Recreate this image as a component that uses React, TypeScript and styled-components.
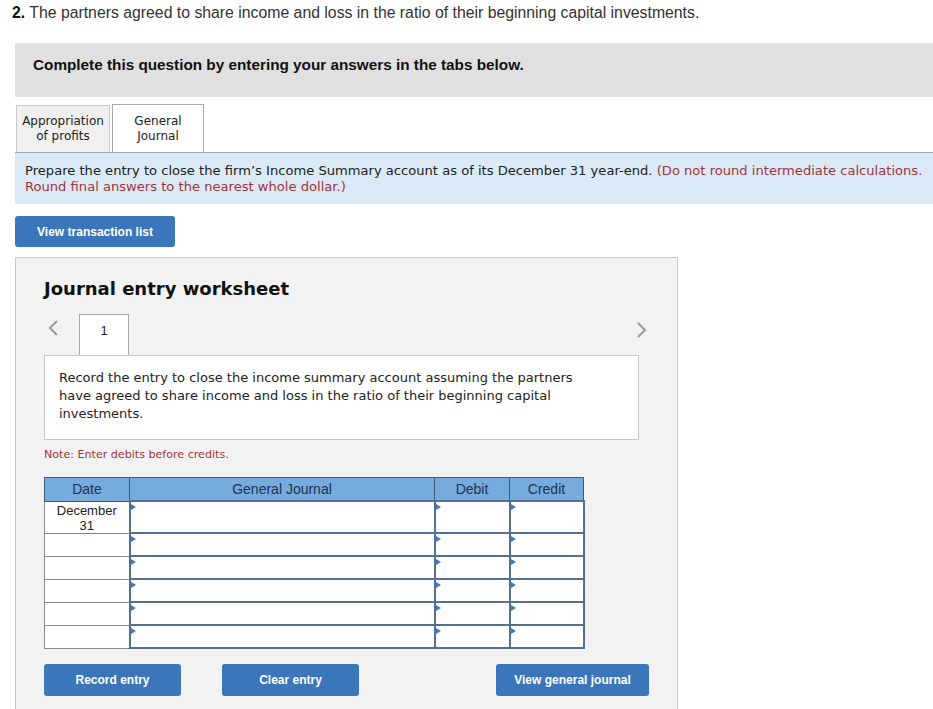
import styled, { createGlobalStyle } from "styled-components";

const GlobalStyle = createGlobalStyle`
  html, body {
    margin: 0;
    padding: 0;
    background: #ffffff;
  }
  body {
    font-family: "Liberation Sans", Arial, sans-serif;
  }
`;

const Page = styled.div`
  width: 933px;
`;

const Heading = styled.div`
  padding: 4px 0 0 12px;
  font-size: 15.8px;
  line-height: 17px;
  color: #333333;

  b {
    color: #111111;
  }
`;

const QuestionBox = styled.div`
  margin: 22px 0 0 15px;
  height: 54px;
  box-sizing: border-box;
  padding: 14px 18px 0;
  background: #e0e0e0;
  font-size: 15.3px;
  font-weight: bold;
  line-height: 16px;
  color: #111111;
`;

const TabRow = styled.div`
  display: flex;
  align-items: flex-end;
  height: 48px;
  margin: 7px 0 0 15px;
`;

const Tab = styled.div<{ $active?: boolean }>`
  display: flex;
  align-items: center;
  justify-content: center;
  box-sizing: border-box;
  width: ${(p) => (p.$active ? 92 : 94)}px;
  height: ${(p) => (p.$active ? 48 : 47)}px;
  margin-left: ${(p) => (p.$active ? 2 : 1)}px;
  background: ${(p) => (p.$active ? "#ffffff" : "#f0f0f0")};
  border: 1px solid ${(p) => (p.$active ? "#a9a9a9" : "#c9c9c9")};
  border-bottom: none;
  text-align: center;
  font-family: "DejaVu Sans", Verdana, sans-serif;
  font-size: 12px;
  line-height: 15px;
  color: #222222;
`;

const InfoPanel = styled.div`
  margin-left: 15px;
  border-top: 1px solid #a9a9a9;
  background: #dbeaf7;
  padding: 10px 10px 9px;
  font-family: "DejaVu Sans", Verdana, sans-serif;
  font-size: 13.1px;
  line-height: 16px;
  color: #222222;
`;

const Hint = styled.span`
  color: #a3343a;
`;

const BlueButton = styled.button<{ $w: number; $h?: number }>`
  display: block;
  width: ${(p) => p.$w}px;
  height: ${(p) => p.$h ?? 32}px;
  padding: 0;
  border: none;
  border-radius: 3px;
  background: #3a76b9;
  color: #ffffff;
  font-family: "Liberation Sans", Arial, sans-serif;
  font-size: 12px;
  font-weight: bold;
  text-align: center;
  cursor: pointer;
`;

const TopButtonWrap = styled.div`
  margin: 12px 0 0 15px;
`;

const Worksheet = styled.div`
  margin: 10px 0 0 15px;
  width: 663px;
  box-sizing: border-box;
  border: 1px solid #c9c9c9;
  background: #f2f2f2;
  padding: 20px 0 40px 28px;
`;

const WorksheetTitle = styled.div`
  font-family: "DejaVu Sans", Verdana, sans-serif;
  font-size: 18px;
  font-weight: bold;
  line-height: 22px;
  color: #111111;
`;

const NavRow = styled.div`
  display: flex;
  align-items: flex-start;
  width: 606px;
  height: 41px;
  margin-top: 14px;
`;

const Arrow = styled.div<{ $right?: boolean }>`
  width: ${(p) => (p.$right ? "auto" : "35px")};
  margin-left: ${(p) => (p.$right ? "auto" : "0")};
  padding: ${(p) => (p.$right ? "7px 3px 0 0" : "5px 0 0 4px")};
  box-sizing: border-box;
  line-height: 0;
`;

const NumTab = styled.div`
  position: relative;
  z-index: 1;
  width: 50px;
  height: 41px;
  margin-bottom: -1px;
  box-sizing: border-box;
  padding-top: 8px;
  background: #ffffff;
  border: 1px solid #a9a9a9;
  border-bottom: none;
  text-align: center;
  font-family: "Liberation Sans", Arial, sans-serif;
  font-size: 13px;
  line-height: 16px;
  color: #222222;
`;

const EntryBox = styled.div`
  width: 595px;
  box-sizing: border-box;
  border: 1px solid #c9c9c9;
  background: #ffffff;
  padding: 13px 14px 16px;
  font-family: "DejaVu Sans", Verdana, sans-serif;
  font-size: 13px;
  line-height: 18px;
  color: #222222;
`;

const Note = styled.div`
  margin-top: 8px;
  font-family: "DejaVu Sans", Verdana, sans-serif;
  font-size: 11.1px;
  line-height: 14px;
  color: #a3343a;
`;

const Journal = styled.table`
  margin-top: 15px;
  border-collapse: collapse;
  table-layout: fixed;
  font-family: "Liberation Sans", Arial, sans-serif;
  font-size: 13px;
`;

const HeadCell = styled.th<{ $w: number }>`
  width: ${(p) => p.$w}px;
  height: 22px;
  padding: 0;
  background: #77aadd;
  border: 1px solid #3d5a7a;
  font-size: 14px;
  font-weight: normal;
  color: #1d3350;
  text-align: center;
`;

const Row = styled.tr<{ $tall?: boolean }>`
  height: ${(p) => (p.$tall ? 30 : 23)}px;
`;

const DateCell = styled.td`
  padding: 1px 0 0;
  background: #ffffff;
  border: 1px solid #8a8a8a;
  vertical-align: top;
  text-align: center;
  line-height: 15px;
  color: #222222;
`;

const InputCell = styled.td`
  position: relative;
  padding: 0;
  background: #ffffff;
  border: 2px solid #54718f;

  &::before {
    content: "";
    position: absolute;
    left: 0;
    top: 2px;
    border-left: 5px solid #3d79c0;
    border-top: 3px solid transparent;
    border-bottom: 3px solid transparent;
  }
`;

const ActionRow = styled.div`
  display: flex;
  width: 605px;
  margin-top: 15px;
`;

const Gap = styled.div<{ $w?: number }>`
  width: ${(p) => (p.$w ? `${p.$w}px` : "auto")};
  flex: ${(p) => (p.$w ? "none" : "1")};
`;

const Chevron = ({ right }: { right?: boolean }) => (
  <svg width="11" height="18" viewBox="0 0 11 18">
    <polyline
      points={right ? "2,2 9,9 2,16" : "9,2 2,9 9,16"}
      fill="none"
      stroke="#9a9a9a"
      strokeWidth="2"
    />
  </svg>
);

const rows = [0, 1, 2, 3, 4, 5];

export default function App() {
  return (
    <Page>
      <GlobalStyle />
      <Heading>
        <b>2.</b> The partners agreed to share income and loss in the ratio of
        their beginning capital investments.
      </Heading>

      <QuestionBox>
        Complete this question by entering your answers in the tabs below.
      </QuestionBox>

      <TabRow>
        <Tab>
          Appropriation
          <br />
          of profits
        </Tab>
        <Tab $active>
          General
          <br />
          Journal
        </Tab>
      </TabRow>

      <InfoPanel>
        Prepare the entry to close the firm’s Income Summary account as of its
        December 31 year-end.{" "}
        <Hint>
          (Do not round intermediate calculations.
          <br />
          Round final answers to the nearest whole dollar.)
        </Hint>
      </InfoPanel>

      <TopButtonWrap>
        <BlueButton $w={160} $h={31}>
          View transaction list
        </BlueButton>
      </TopButtonWrap>

      <Worksheet>
        <WorksheetTitle>Journal entry worksheet</WorksheetTitle>

        <NavRow>
          <Arrow>
            <Chevron />
          </Arrow>
          <NumTab>1</NumTab>
          <Arrow $right>
            <Chevron right />
          </Arrow>
        </NavRow>

        <EntryBox>
          Record the entry to close the income summary account assuming the
          partners
          <br />
          have agreed to share income and loss in the ratio of their beginning
          capital
          <br />
          investments.
        </EntryBox>

        <Note>Note: Enter debits before credits.</Note>

        <Journal>
          <thead>
            <tr>
              <HeadCell $w={84}>Date</HeadCell>
              <HeadCell $w={304}>General Journal</HeadCell>
              <HeadCell $w={74}>Debit</HeadCell>
              <HeadCell $w={73}>Credit</HeadCell>
            </tr>
          </thead>
          <tbody>
            {rows.map((r) => (
              <Row key={r} $tall={r === 0}>
                <DateCell>
                  {r === 0 && (
                    <>
                      December
                      <br />
                      31
                    </>
                  )}
                </DateCell>
                <InputCell />
                <InputCell />
                <InputCell />
              </Row>
            ))}
          </tbody>
        </Journal>

        <ActionRow>
          <BlueButton $w={137}>Record entry</BlueButton>
          <Gap $w={41} />
          <BlueButton $w={137}>Clear entry</BlueButton>
          <Gap />
          <BlueButton $w={153}>View general journal</BlueButton>
        </ActionRow>
      </Worksheet>
    </Page>
  );
}
